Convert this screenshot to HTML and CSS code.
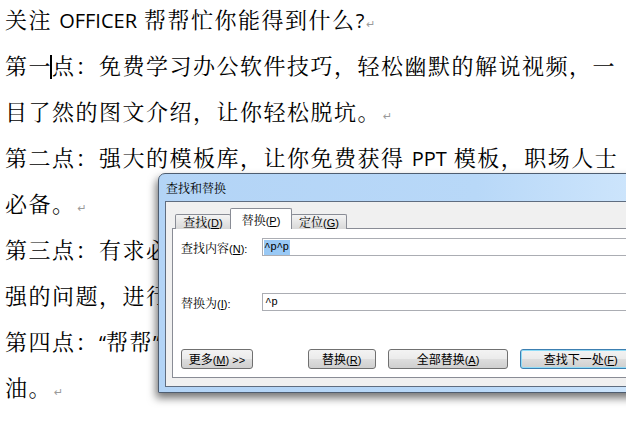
FILE: index.html
```html
<!DOCTYPE html>
<html lang="zh-CN">
<head>
  <meta charset="UTF-8" />
  <meta name="viewport" content="width=device-width, initial-scale=1.0" />
  <title>查找和替换</title>
  <link rel="stylesheet" href="styles.css">
</head>
<body>
  <div class="doc">
    <div class="line">关注 <span class="latin">OFFICER</span> 帮帮忙你能得到什么<span class="latin">?</span><span class="mark">↵</span></div>
    <div class="line">第一<span class="caret"></span>点：免费学习办公软件技巧，轻松幽默的解说视频，一</div>
    <div class="line">目了然的图文介绍，让你轻松脱坑。<span class="mark">↵</span></div>
    <div class="line full">第二点：强大的模板库，让你免费获得 <span class="latin">PPT</span> 模板，职场人士</div>
    <div class="line">必备。<span class="mark">↵</span></div>
    <div class="line">第三点：有求必应，工作中遇到任何办公软件上的难题，比较</div>
    <div class="line">强的问题，进行专业的解答和演示，帮你快速解决工作难题。</div>
    <div class="line">第四点：<span class="latin">“</span>帮帮<span class="latin">”</span>会持续更新，和你一起学习，一起成长，一起加</div>
    <div class="line">油。<span class="mark">↵</span></div>
  </div>

  <div class="dialog">
    <div class="title">查找和替换</div>
    <div class="client">
      <div class="tabs">
        <div class="tab">查找<span class="key">(<u>D</u>)</span></div>
        <div class="tab active">替换<span class="key">(<u>P</u>)</span></div>
        <div class="tab">定位<span class="key">(<u>G</u>)</span></div>
      </div>
      <div class="panel">
        <div class="row">
          <span class="label">查找内容<span class="key">(<u>N</u>):</span></span>
          <div class="input"><span class="sel">^p^p</span></div>
        </div>
        <div class="row second">
          <span class="label">替换为<span class="key">(<u>I</u>):</span></span>
          <div class="input"><span class="val">^p</span></div>
        </div>
        <div class="buttons">
          <button class="btn more">更多<span class="key">(<u>M</u>) &gt;&gt;</span></button>
          <button class="btn replace">替换<span class="key">(<u>R</u>)</span></button>
          <button class="btn wide">全部替换<span class="key">(<u>A</u>)</span></button>
          <button class="btn wide default">查找下一处<span class="key">(<u>F</u>)</span></button>
        </div>
      </div>
    </div>
  </div>
</body>
</html>
```

FILE: styles.css
```css
body {
  margin: 0;
  width: 626px;
  height: 429px;
  overflow: hidden;
  position: relative;
  background: #fff;
  font-family: "Noto Serif CJK SC", "Noto Sans CJK SC", sans-serif;
}
.doc {
  margin-top: -4px;
  padding-left: 5px;
  width: 612px;
  font-size: 22px;
  line-height: 46px;
  letter-spacing: 1.5px;
  color: #000;
}
.line {
  height: 46px;
  white-space: nowrap;
}
.full {
  text-align: justify;
  text-align-last: justify;
}
.latin {
  font-family: "Open Sans", sans-serif;
  font-size: 20px;
  letter-spacing: 0;
}
.mark {
  font-family: "DejaVu Sans", sans-serif;
  font-size: 11px;
  color: #9a9a9a;
  letter-spacing: 0;
  margin-left: 2px;
}
.caret {
  display: inline-block;
  width: 2px;
  height: 24px;
  margin-left: -2px;
  background: #000;
  vertical-align: -5px;
}

/* dialog */
.dialog {
  position: absolute;
  left: 158px;
  top: 173px;
  width: 490px;
  height: 220px;
  box-sizing: border-box;
  border: 1px solid #4e5d70;
  border-radius: 7px 7px 0 0;
  background: linear-gradient(to right, #b3d4f6, #b8d8f8 65%, #cfe6fc);
  box-shadow: -2px 5px 9px rgba(0, 0, 0, 0.55);
  padding: 0 6px 5px 6px;
  display: flex;
  flex-direction: column;
  font-size: 12px;
  color: #000;
}
.title {
  height: 27px;
  line-height: 28px;
  padding-left: 1px;
}
.key {
  font-family: "Liberation Sans", sans-serif;
  font-size: 11px;
}
.client {
  flex: 1;
  background: #f0f0f0;
  border: 1px solid #5f6d80;
  border-right: none;
  padding: 6px 0 8px 6px;
  display: flex;
  flex-direction: column;
}
.tabs {
  display: flex;
  align-items: flex-end;
  height: 21px;
  margin-left: 3px;
  margin-bottom: -1px;
  position: relative;
  z-index: 1;
}
.tab {
  box-sizing: border-box;
  height: 15px;
  width: 56px;
  border: 1px solid #898c95;
  border-bottom: none;
  border-radius: 2px 2px 0 0;
  background: linear-gradient(#f4f4f4, #e6e6e6 50%, #d8d8d8);
  text-align: center;
  line-height: 14px;
  white-space: nowrap;
}
.tab.active {
  height: 21px;
  width: 62px;
  margin: 0 -1px;
  background: #fff;
  line-height: 22px;
}
.panel {
  flex: 1;
  background: #fff;
  border: 1px solid #898c95;
  border-right: none;
  padding: 9px 0 0 8px;
  display: flex;
  flex-direction: column;
}
.row {
  display: flex;
  align-items: center;
}
.row.second {
  margin-top: 37px;
}
.label {
  width: 81px;
  white-space: nowrap;
}
.input {
  flex: 1;
  height: 18px;
  box-sizing: border-box;
  border: 1px solid #abadb3;
  padding: 1px 0 0 1px;
  font-family: "Liberation Mono", monospace;
  font-size: 11px;
  letter-spacing: -0.4px;
  line-height: 15px;
}
.sel {
  display: inline-block;
  background: #99c9f5;
  height: 15px;
  padding-right: 1px;
}
.val {
  padding-left: 1px;
}
.buttons {
  display: flex;
  margin-top: 38px;
}
.btn {
  height: 20px;
  box-sizing: border-box;
  border: 1px solid #707070;
  border-radius: 3px;
  background: linear-gradient(#f3f3f3, #ebebeb 48%, #dddddd 52%, #cfcfcf);
  font-family: "Noto Sans CJK SC", sans-serif;
  font-size: 12px;
  color: #000;
  padding: 0;
  line-height: 17px;
  white-space: nowrap;
}
.btn.more {
  width: 76px;
}
.btn.replace {
  width: 72px;
  margin-left: 55px;
}
.btn.wide {
  width: 128px;
  margin-left: 12px;
}
.btn.default {
  border-color: #3c7fb1;
  box-shadow: inset 0 0 0 1px #8fdcf7;
}
```
